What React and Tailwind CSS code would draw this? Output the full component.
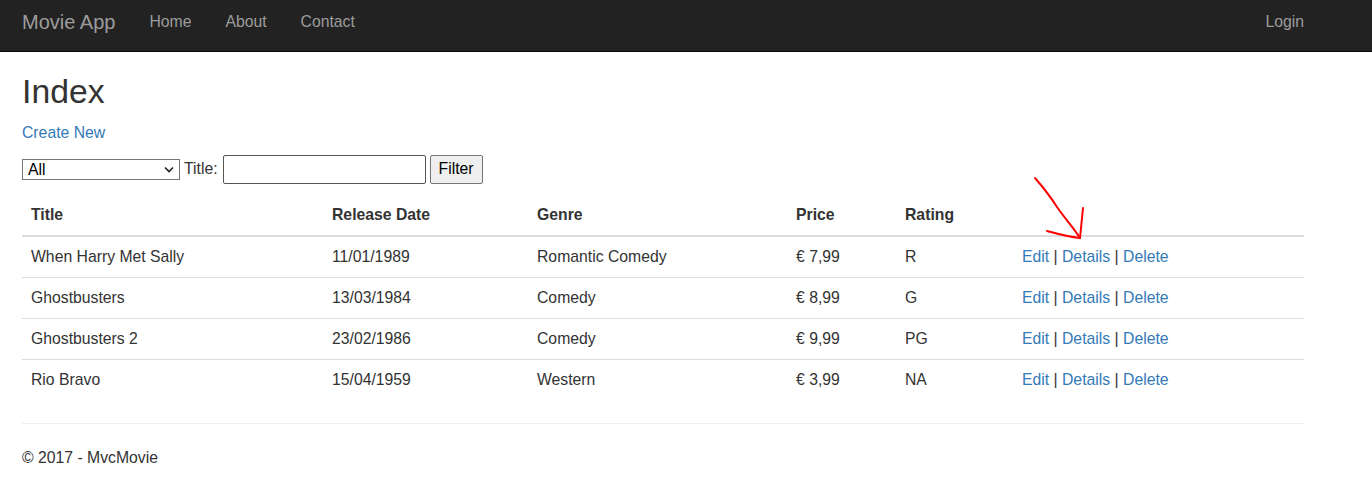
import React from "react";

const movies = [
  { title: "When Harry Met Sally", date: "11/01/1989", genre: "Romantic Comedy", price: "€ 7,99", rating: "R" },
  { title: "Ghostbusters", date: "13/03/1984", genre: "Comedy", price: "€ 8,99", rating: "G" },
  { title: "Ghostbusters 2", date: "23/02/1986", genre: "Comedy", price: "€ 9,99", rating: "PG" },
  { title: "Rio Bravo", date: "15/04/1959", genre: "Western", price: "€ 3,99", rating: "NA" },
];

function Navbar() {
  return (
    <div className="h-[52px] border-b border-[#080808] bg-[#222]">
      <div className="ml-[22px] flex h-[51px] w-[1282px] items-center pb-[6px] text-[#9d9d9d]">
        <span className="text-[20px]">Movie App</span>
        <nav className="ml-[34px] flex gap-[34px] text-[15.75px]">
          <a href="#">Home</a>
          <a href="#">About</a>
          <a href="#">Contact</a>
        </nav>
        <a href="#" className="ml-auto text-[15.75px]">
          Login
        </a>
      </div>
    </div>
  );
}

function FilterForm() {
  return (
    <div className="mb-[11px] flex h-[29px] items-center">
      <div className="relative h-[21px] w-[158px] border border-[#767676] bg-white">
        <span className="absolute left-[5px] top-0 leading-[19px] text-black">All</span>
        <svg
          className="absolute right-[5px] top-[6px]"
          width="10"
          height="7"
          viewBox="0 0 10 7"
          fill="none"
          stroke="#222"
          strokeWidth="1.6"
        >
          <path d="M1 1.5l4 4 4-4" />
        </svg>
      </div>
      <span className="ml-[4px]">Title:</span>
      <input
        type="text"
        className="ml-[5px] h-[29px] w-[203px] rounded-[2px] border border-[#555] bg-white"
      />
      <button className="ml-[4px] h-[29px] w-[53px] rounded-[2px] border border-[#767676] bg-[#efefef] text-black">
        Filter
      </button>
    </div>
  );
}

function MovieTable() {
  return (
    <table className="mb-[23px] w-full table-fixed border-collapse">
      <colgroup>
        <col className="w-[301px]" />
        <col className="w-[205px]" />
        <col className="w-[259px]" />
        <col className="w-[109px]" />
        <col className="w-[117px]" />
        <col />
      </colgroup>
      <thead>
        <tr className="border-b-2 border-[#ddd] text-left">
          <th className="p-[9px] font-bold">Title</th>
          <th className="p-[9px] font-bold">Release Date</th>
          <th className="p-[9px] font-bold">Genre</th>
          <th className="p-[9px] font-bold">Price</th>
          <th className="p-[9px] font-bold">Rating</th>
          <th className="p-[9px]"></th>
        </tr>
      </thead>
      <tbody>
        {movies.map((m, i) => (
          <tr key={m.title} className={i > 0 ? "border-t border-[#ddd]" : ""}>
            <td className="px-[9px] py-[8.75px]">{m.title}</td>
            <td className="px-[9px] py-[8.75px]">{m.date}</td>
            <td className="px-[9px] py-[8.75px]">{m.genre}</td>
            <td className="px-[9px] py-[8.75px]">{m.price}</td>
            <td className="px-[9px] py-[8.75px]">{m.rating}</td>
            <td className="px-[9px] py-[8.75px]">
              <a href="#" className="text-[#337ab7]">Edit</a> |{" "}
              <a href="#" className="text-[#337ab7]">Details</a> |{" "}
              <a href="#" className="text-[#337ab7]">Delete</a>
            </td>
          </tr>
        ))}
      </tbody>
    </table>
  );
}

export default function App() {
  return (
    <div className="relative min-h-[490px] bg-white font-['Liberation_Sans',Arial,sans-serif] text-[15.75px] leading-[22.5px] text-[#333]">
      <Navbar />
      <div className="ml-[22px] w-[1282px]">
        <h2 className="mb-[12px] mt-[21px] text-[33.75px] leading-[37px]">Index</h2>
        <p className="mb-[10px]">
          <a href="#" className="text-[#337ab7]">Create New</a>
        </p>
        <FilterForm />
        <MovieTable />
        <hr className="border-t border-[#eee]" />
        <p className="mt-[23px]">© 2017 - MvcMovie</p>
      </div>

      {/* hand-drawn red arrow pointing at Details */}
      <svg
        className="pointer-events-none absolute left-0 top-0"
        width="1372"
        height="490"
        fill="none"
        stroke="#f00"
        strokeWidth="2"
        strokeLinecap="round"
        strokeLinejoin="round"
      >
        <path d="M1035 178 C1042 186 1050 196 1057 207 C1066 220 1074 228 1080 238" />
        <path d="M1047 231 C1058 234 1070 237 1080 238" />
        <path d="M1083 208 C1082 218 1081 228 1080 238" />
      </svg>
    </div>
  );
}
